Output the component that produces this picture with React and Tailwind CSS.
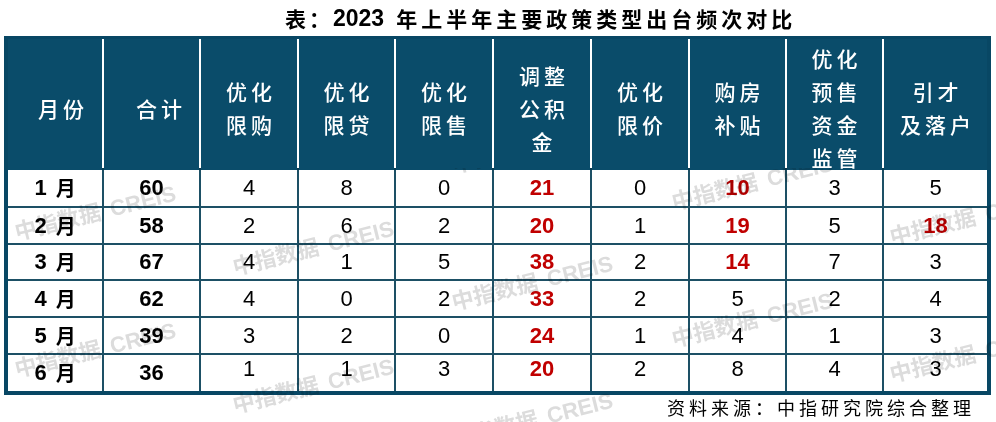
import React from "react";

const headers = [
  { lines: ["月份"], extra: "pl-[16px]" },
  { lines: ["合计"], extra: "pl-[19px]" },
  { lines: ["优化", "限购"] },
  { lines: ["优化", "限贷"] },
  { lines: ["优化", "限售"] },
  { lines: ["调整", "公积", "金"] },
  { lines: ["优化", "限价"] },
  { lines: ["购房", "补贴"] },
  { lines: ["优化", "预售", "资金", "监管"] },
  { lines: ["引才", "及落户"] },
];

const rows = [
  { m: "1", v: [60, 4, 8, 0, 21, 0, 10, 3, 5], red: [4, 6] },
  { m: "2", v: [58, 2, 6, 2, 20, 1, 19, 5, 18], red: [4, 6, 8] },
  { m: "3", v: [67, 4, 1, 5, 38, 2, 14, 7, 3], red: [4, 6] },
  { m: "4", v: [62, 4, 0, 2, 33, 2, 5, 2, 4], red: [4] },
  { m: "5", v: [39, 3, 2, 0, 24, 1, 4, 1, 3], red: [4] },
  { m: "6", v: [36, 1, 1, 3, 20, 2, 8, 4, 3], red: [4], lift: true },
];

const marks = [
  "left-[95px] top-[44px]",
  "left-[95px] top-[181px]",
  "left-[313px] top-[79px]",
  "left-[313px] top-[217px]",
  "left-[532px] top-[114px]",
  "left-[532px] top-[251px]",
  "left-[752px] top-[14px]",
  "left-[752px] top-[151px]",
  "left-[970px] top-[49px]",
  "left-[970px] top-[186px]",
  "left-[532px] top-[-23px]",
];

export default function App() {
  return (
    <div className="relative w-[996px] h-[422px] bg-white overflow-hidden font-['Liberation_Sans','Noto_Sans_CJK_SC',sans-serif] text-black">
      {/* Title */}
      <div className="h-[36px] flex items-center pl-[285px] font-bold">
        <span className="font-['Noto_Sans_CJK_SC',sans-serif] text-[21px] tracking-[3px] leading-none">表：</span>
        <span className="text-[23px] leading-none">2023</span>
        <span className="ml-[12px] font-['Noto_Sans_CJK_SC',sans-serif] text-[21px] tracking-[4px] leading-none">
          年上半年主要政策类型出台频次对比
        </span>
      </div>

      {/* Table frame */}
      <div className="ml-[4px] w-[987px] border-l-4 border-r-4 border-t-[3px] border-b-4 border-[#084764]">
        {/* Header */}
        <div className="grid grid-cols-[94px_95px_96px_95px_96px_96px_96px_95px_95px_103px] gap-x-[2px] bg-white h-[129px]">
          {headers.map((h, i) => (
            <div
              key={i}
              className={`bg-[#0a4c6a] text-white flex flex-col items-center justify-center pt-[3px] font-['Noto_Sans_CJK_SC',sans-serif] font-medium text-[21px] leading-[33px] tracking-[4px] ${h.extra || "pl-[4px]"}`}
            >
              {h.lines.map((l, j) => (
                <div key={j}>{l}</div>
              ))}
            </div>
          ))}
        </div>
        <div className="h-[2px] bg-[#093a50]" />
        {/* Body */}
        <div className="grid grid-cols-[94px_95px_96px_95px_96px_96px_96px_95px_95px_103px] grid-rows-[36px_35px_34px_35px_35px_36px] gap-[2px] bg-[#1d5065]">
          {rows.map((r, ri) => (
            <React.Fragment key={ri}>
              <div className="bg-white flex items-center justify-center font-bold text-[22px] leading-none">
                <span>{r.m}</span>
                <span className="ml-[9px] font-['Noto_Sans_CJK_SC',sans-serif] text-[20px]">月</span>
              </div>
              {r.v.map((v, ci) => {
                const isRed = r.red.includes(ci);
                const bold = ci === 0 || isRed;
                return (
                  <div
                    key={ci}
                    className={`bg-white flex items-center justify-center text-[22px] leading-none ${bold ? "font-bold" : ""} ${isRed ? "text-[#c00000]" : ""} ${r.lift && ci > 0 ? "pb-[8px]" : ""}`}
                  >
                    {v}
                  </div>
                );
              })}
            </React.Fragment>
          ))}
        </div>
      </div>

      {/* Source */}
      <div className="h-[27px] flex justify-end items-start pt-[1px] pr-[21px]">
        <span className="font-['Noto_Sans_CJK_SC',sans-serif] text-[18px] leading-[22px] tracking-[4px]">
          资料来源：中指研究院综合整理
        </span>
      </div>

      {/* Watermarks */}
      <div className="absolute left-0 top-[168px] w-[996px] h-[254px] overflow-hidden pointer-events-none mix-blend-multiply">
        {marks.map((m, i) => (
          <div
            key={i}
            className={`absolute ${m} -translate-x-1/2 -translate-y-1/2 -rotate-[14deg] whitespace-nowrap font-bold text-[22px] leading-none text-[#dcdcdc] flex items-baseline`}
          >
            <span className="font-['Noto_Sans_CJK_SC',sans-serif]">中指数据</span>
            <span className="ml-[10px] font-['Liberation_Sans',sans-serif]">CREIS</span>
          </div>
        ))}
      </div>
    </div>
  );
}
